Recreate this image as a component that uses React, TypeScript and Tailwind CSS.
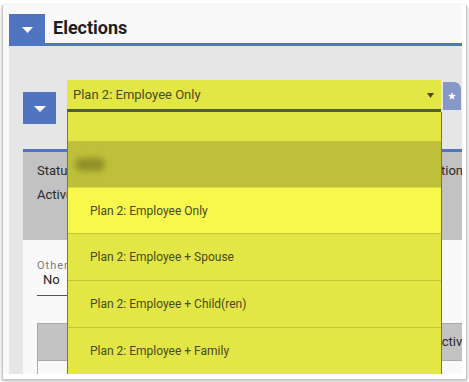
import React from "react";

function DownTri({ w, h, color }: { w: number; h: number; color: string }) {
  return (
    <svg width={w} height={h} viewBox={`0 0 ${w} ${h}`}>
      <polygon points={`0,0 ${w},0 ${w / 2},${h}`} fill={color} />
    </svg>
  );
}

const items = [
  "Plan 2: Employee + Spouse",
  "Plan 2: Employee + Child(ren)",
  "Plan 2: Employee + Family",
];

export default function App() {
  return (
    <div className="w-[469px] h-[382px] bg-white overflow-hidden font-['Roboto',sans-serif]">
      <div className="ml-[2px] mt-[5px] w-[465px] h-[375px] border-x border-b border-[#c6c6c6] bg-white shadow-[0_1px_3px_rgba(0,0,0,0.3)]">
        <div className="relative w-[459px] h-[369px] bg-[#f9f9f9] overflow-hidden">
          {/* Header */}
          <div className="pl-[6px] pt-[9px] flex items-center">
            <div className="w-[36px] h-[29px] bg-[#5075c0] flex items-center justify-center pt-[3px]">
              <DownTri w={11} h={6} color="#ffffff" />
            </div>
            <div className="ml-[8px] text-[18px] leading-[20px] font-bold text-[#1e1e1e] pb-[1px]">
              Elections
            </div>
          </div>
          <div className="ml-[6px] h-[3px] bg-[#5075c0]" />

          {/* Gray panel */}
          <div className="ml-[6px] h-[328px] bg-[#e6e6e6] pl-[14px]">
            <div className="pt-[46px]">
              <div className="w-[33px] h-[32px] bg-[#5075c0] flex items-center justify-center pt-[2px]">
                <DownTri w={12} h={6} color="#ffffff" />
              </div>
            </div>
            <div className="mt-[25px] h-[3px] bg-[#5075c0]" />
            <div className="h-[88px] bg-[#c2c2c2] overflow-hidden pl-[14px] pt-[11px] text-[13px] leading-[16px] text-[#2a2a2a] flex">
              <div className="flex flex-col gap-[8px]">
                <span>Status</span>
                <span>Active</span>
              </div>
              <div className="ml-auto -mr-[1px]">Election</div>
            </div>
            <div className="h-[134px] bg-[#f9f9f9] pl-[14px] pt-[19px]">
              <div className="text-[11px] leading-[13px] tracking-[1px] text-[#7a7a7a]">Other</div>
              <div className="w-[120px] border-b border-[#555555] pl-[6px] pb-[7px] text-[13px] leading-[16px] text-[#222222]">
                No
              </div>
              <div className="mt-[27px] h-[38px] bg-[#c3c3c3] border-y border-l border-[#a9a9a9] flex items-center justify-end overflow-hidden text-[13px] text-[#2a2a2a]">
                <span className="-mr-[7px]">Effective</span>
              </div>
              <div className="h-[20px] border-l border-[#a9a9a9]" />
            </div>
          </div>

          {/* Dropdown overlay */}
          <div className="absolute left-[64px] top-[75px] w-[395px]">
            <div className="flex items-start">
              <div className="w-[374px]">
                <div className="h-[29px] bg-[#e3e745] flex items-center pl-[6px] pr-[7px] text-[13px] text-[#4a4a1c]">
                  <span className="pt-[1px]">Plan 2: Employee Only</span>
                  <span className="ml-auto pt-[2px]">
                    <DownTri w={7} h={5} color="#4a4a1c" />
                  </span>
                </div>
                <div className="h-[3px] bg-[#526030]" />
              </div>
              <div className="ml-[2px] mt-[2px] w-[18px] h-[28px] bg-[#8798c6] rounded-tr-[7px] flex items-center justify-center pr-[1px]">
                <svg width="8" height="8" viewBox="0 0 10 10">
                  <polygon
                    points="5,0 6.2,3.5 10,3.6 7,5.9 8.1,9.6 5,7.4 1.9,9.6 3,5.9 0,3.6 3.8,3.5"
                    fill="#ffffff"
                  />
                </svg>
              </div>
            </div>
            <div className="w-[375px] border-x border-[#4a74d2] text-[12px] text-[#4a4a1c]">
              <div className="h-[30px] bg-[#e3e745] border-b border-[#c4c53a]" />
              <div className="h-[46px] bg-[#bfc03a] border-b border-[#d6d843] flex items-center pl-[7px]">
                <div className="w-[30px] h-[13px] rounded-full bg-[#8e8f28] blur-[3px]" />
              </div>
              <div className="h-[46px] bg-[#f7f74c] border-b border-[#c4c53a] flex items-center pl-[22px]">
                Plan 2: Employee Only
              </div>
              {items.map((t) => (
                <div
                  key={t}
                  className="h-[47px] bg-[#e3e745] border-b border-[#c4c53a] flex items-center pl-[22px]"
                >
                  {t}
                </div>
              ))}
            </div>
          </div>
        </div>
      </div>
    </div>
  );
}
